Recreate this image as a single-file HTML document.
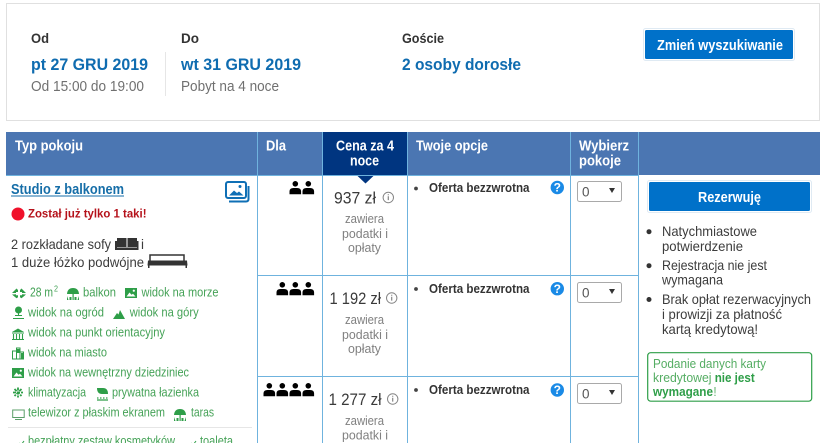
<!DOCTYPE html>
<html lang="pl">
<head>
<meta charset="utf-8">
<title>Studio z balkonem</title>
<style>
html,body{margin:0;padding:0;background:#fff;width:837px;height:443px;overflow:hidden}
svg{display:block}
text{font-family:"Liberation Sans",Arial,sans-serif;white-space:pre}
.b{font-weight:700}
.lab{font-size:14px;font-weight:700;fill:#333}
.blue{font-size:17px;font-weight:700;fill:#0f6cb0}
.sub{font-size:14.5px;fill:#707070}
.h{font-size:14.5px;font-weight:700;fill:#fff}
.g{font-size:13px;fill:#45a257}
.p{font-size:16.5px;fill:#3a3a3a}
.tax{font-size:13px;fill:#808080}
.of{font-size:12.5px;font-weight:700;fill:#333}
.t{font-size:14px;fill:#3c3c3c}
.gb{font-size:13px;fill:#55ad63}
</style>
</head>
<body>
<svg width="837" height="443" viewBox="0 0 837 443" xmlns="http://www.w3.org/2000/svg">
<defs>
<g id="person"><circle cx="5.8" cy="2.8" r="2.8" fill="#000"/><path d="M0 13.300V10.500Q0 7 4 7h3.600q4 0 4 3.500v2.800z" fill="#000"/></g>
<g id="info"><circle cx="0" cy="0" r="5.200" fill="none" stroke="#858585" stroke-width="1"/><path d="M0-1.200v3.800M0-3.200v1" stroke="#858585" stroke-width="1.200" fill="none"/></g>
<g id="help"><circle r="6.700" fill="#1a8ae6"/><text x="0" y="4.200" text-anchor="middle" font-size="12" font-weight="700" fill="#fff">?</text></g>
<g id="sel"><rect x=".5" y=".5" width="44" height="20" rx="2" fill="#fff" stroke="#a9a9a9"/><path d="M32 7h6l-3 5z" fill="#333"/><text x="5" y="15.500" font-size="13.500" fill="#555" textLength="7.500" lengthAdjust="spacingAndGlyphs">0</text></g>
<g id="umb" fill="#2e9e48"><path d="M0 7Q.5 1 6 1t6 6z"/><rect x="5.500" y="6" width="1.200" height="7"/><path d="M0 9l1.500 4H0zM12 9l-1.500 4H12zM2.500 10h2v3h-2zM7.500 10h2v3h-2z"/></g>
<g id="pic"><rect x="0" y="0" width="12" height="10" fill="#2e9e48"/><path d="M1.500 8.500l3-4 2 2.200 1.500-1 2.500 2.800z" fill="#fff"/><circle cx="8.800" cy="2.700" r="1.100" fill="#fff"/></g>
</defs>

<!-- top panel -->
<rect x="6.500" y="3.500" width="813" height="117" fill="#fff" stroke="#e0e0e0"/>
<text class="lab" x="31" y="43" textLength="18" lengthAdjust="spacingAndGlyphs">Od</text>
<text class="blue" x="31" y="70" textLength="117" lengthAdjust="spacingAndGlyphs">pt 27 GRU 2019</text>
<text class="sub" x="31" y="91" textLength="113" lengthAdjust="spacingAndGlyphs">Od 15:00 do 19:00</text>
<rect x="165" y="52" width="1" height="44" fill="#e6e6e6"/>
<text class="lab" x="181" y="43" textLength="18" lengthAdjust="spacingAndGlyphs">Do</text>
<text class="blue" x="181" y="70" textLength="120" lengthAdjust="spacingAndGlyphs">wt 31 GRU 2019</text>
<text class="sub" x="181" y="91" textLength="98" lengthAdjust="spacingAndGlyphs">Pobyt na 4 noce</text>
<text class="lab" x="402" y="43" textLength="42" lengthAdjust="spacingAndGlyphs">Goście</text>
<text class="blue" x="402" y="70" textLength="119" lengthAdjust="spacingAndGlyphs">2 osoby dorosłe</text>
<rect x="643.500" y="28.500" width="151" height="32" rx="2" fill="#fff" stroke="#dfeaf3"/>
<rect x="645" y="30" width="148" height="29" rx="1.500" fill="#0071c9"/>
<text class="h" x="657" y="50" textLength="126" lengthAdjust="spacingAndGlyphs">Zmień wyszukiwanie</text>

<!-- table header -->
<rect x="6" y="132" width="814" height="43" fill="#4b76b2"/>
<rect x="323" y="132" width="84" height="43" fill="#003580"/>
<path d="M356.500 175h18l-9 8.500z" fill="#003580"/>
<text class="h" x="15" y="150.500" textLength="68" lengthAdjust="spacingAndGlyphs">Typ pokoju</text>
<text class="h" x="266" y="150.500" textLength="20" lengthAdjust="spacingAndGlyphs">Dla</text>
<text class="h" x="336" y="150.500" textLength="58" lengthAdjust="spacingAndGlyphs">Cena za 4</text>
<text class="h" x="350" y="165.500" textLength="29" lengthAdjust="spacingAndGlyphs">noce</text>
<text class="h" x="416" y="150.500" textLength="72" lengthAdjust="spacingAndGlyphs">Twoje opcje</text>
<text class="h" x="579" y="150.500" textLength="50" lengthAdjust="spacingAndGlyphs">Wybierz</text>
<text class="h" x="579" y="165.500" textLength="42" lengthAdjust="spacingAndGlyphs">pokoje</text>

<!-- grid lines -->
<g fill="#6fb3de">
<rect x="6" y="175" width="632" height="1"/>
<rect x="257" y="132" width="1" height="311"/>
<rect x="322" y="132" width="1" height="311"/>
<rect x="407" y="132" width="1" height="311"/>
<rect x="570" y="132" width="1" height="311"/>
<rect x="638" y="132" width="1" height="311"/>
<rect x="257" y="275" width="381" height="1"/>
<rect x="257" y="376" width="381" height="1"/>
</g>

<!-- room column -->
<text class="b" x="11" y="194" font-size="14.500" fill="#166ea8" textLength="113" lengthAdjust="spacingAndGlyphs">Studio z balkonem</text>
<rect x="11" y="195.500" width="113" height="1" fill="#166ea8"/>
<g fill="none" stroke="#0f6fb5">
<rect x="226" y="182" width="20" height="16" rx="2" stroke-width="2"/>
<path d="M229 201.500h17q2.500 0 2.500-2.500V186" stroke-width="2"/>
</g>
<path d="M229 195.500l5-5 3 2.500 2-1.500 4.500 4z" fill="#0f6fb5"/>
<circle cx="240" cy="186.500" r="1.500" fill="#0f6fb5"/>

<circle cx="18" cy="214" r="6.500" fill="#f0112b"/>
<text class="b" x="28" y="217.500" font-size="12" fill="#b5121b" textLength="118.500" lengthAdjust="spacingAndGlyphs">Został już tylko 1 taki!</text>

<text class="t" x="11" y="249" textLength="100" lengthAdjust="spacingAndGlyphs">2 rozkładane sofy</text>
<path d="M117 238h9.500v9H117zM127.500 238h9.500v9h-9.500z" fill="#333"/>
<rect x="115" y="241" width="2" height="9" fill="#333"/>
<rect x="137" y="241" width="1.500" height="9" fill="#333"/>
<rect x="115" y="247.500" width="23.500" height="2.500" fill="#333"/>
<text class="t" x="141" y="249" textLength="3" lengthAdjust="spacingAndGlyphs">i</text>
<text class="t" x="11" y="267" textLength="133" lengthAdjust="spacingAndGlyphs">1 duże łóżko podwójne</text>
<path d="M150 261v-6h34v6" fill="none" stroke="#333" stroke-width="1.500"/>
<path d="M148 260.500h39l.5 5h-40z" fill="#333"/>
<path d="M148 265h1.500v3H148zM185.500 265h1.500v3h-1.500z" fill="#333"/>

<!-- facilities -->
<path d="M12 293l4.500-4.500 1.500 1.500v2h-2v1zM26 293l-4.500-4.500-1.500 1.500v2h2v1zM12 294.500l4.500 3.800 1.500-1v-2h-2v-1zM26 294.500l-4.500 3.800-1.500-1v-2h2v-1z" fill="#2e9e48"/>
<text class="g" x="30" y="296.700" textLength="23" lengthAdjust="spacingAndGlyphs">28 m</text>
<text x="54" y="291.500" font-size="8" fill="#45a257" textLength="4" lengthAdjust="spacingAndGlyphs">2</text>
<use href="#umb" x="67" y="287"/>
<text class="g" x="83" y="296.700" textLength="33" lengthAdjust="spacingAndGlyphs">balkon</text>
<use href="#pic" x="125" y="288"/>
<text class="g" x="141.500" y="296.700" textLength="77" lengthAdjust="spacingAndGlyphs">widok na morze</text>

<circle cx="18.500" cy="310" r="3.500" fill="#2e9e48"/>
<path d="M18.500 313v3M15 315.500h7M13 318.500h11" stroke="#2e9e48" stroke-width="1" fill="none"/>
<text class="g" x="28" y="316.700" textLength="76" lengthAdjust="spacingAndGlyphs">widok na ogród</text>
<path d="M113 319l4-6 1.500 1.500 1.500-4.500 5 9z" fill="#2e9e48"/>
<text class="g" x="129.700" y="316.700" textLength="69" lengthAdjust="spacingAndGlyphs">widok na góry</text>

<path d="M12 332l6-3.500 6 3.500z" fill="#2e9e48"/>
<path d="M12 333h12M13.500 334v5M16.500 334v5M19.500 334v5M22.500 334v5M12 339.500h12" stroke="#2e9e48" stroke-width="1.100" fill="none"/>
<text class="g" x="28" y="336.700" textLength="137" lengthAdjust="spacingAndGlyphs">widok na punkt orientacyjny</text>

<path d="M12.500 351h4v8h-4zM16.500 348h3.500v11h-3.500zM20 352h3.500v7H20z" fill="none" stroke="#2e9e48" stroke-width="1"/>
<rect x="17" y="349" width="3" height="4" fill="#2e9e48"/>
<rect x="21" y="353" width="3" height="6" fill="#2e9e48"/>
<text class="g" x="28" y="356.700" textLength="79" lengthAdjust="spacingAndGlyphs">widok na miasto</text>

<use href="#pic" x="12" y="368"/>
<text class="g" x="28" y="376.700" textLength="161" lengthAdjust="spacingAndGlyphs">widok na wewnętrzny dziedziniec</text>

<path d="M18 387.500v10M13 392.500h10M14.500 389l7 7M21.500 389l-7 7" stroke="#2e9e48" stroke-width="1.800" fill="none" stroke-dasharray="3 1"/>
<text class="g" x="28" y="396.700" textLength="58" lengthAdjust="spacingAndGlyphs">klimatyzacja</text>
<path d="M97 388h6q5 0 5 6h-6q-5 0-5-6z" fill="#2e9e48"/>
<path d="M97 398h1.500M100 398h1.500M103 398h1.500M106 398h1.500M97 400h11" stroke="#2e9e48" stroke-width="1.200" fill="none"/>
<text class="g" x="112" y="396.700" textLength="87" lengthAdjust="spacingAndGlyphs">prywatna łazienka</text>

<rect x="12.700" y="410" width="11.500" height="7.500" fill="none" stroke="#5b9f69" stroke-width="1"/>
<path d="M15 419.500h7" stroke="#5b9f69" stroke-width="1"/>
<text class="g" x="28" y="416.700" textLength="137" lengthAdjust="spacingAndGlyphs">telewizor z płaskim ekranem</text>
<use href="#umb" x="174" y="408"/>
<text class="g" x="191" y="416.700" textLength="23" lengthAdjust="spacingAndGlyphs">taras</text>

<rect x="8" y="427" width="244" height="1" fill="#e6e6e6"/>
<path d="M19 443l2 2 3-4" stroke="#2e9e48" fill="none"/>
<text class="g" x="28" y="445" textLength="147" lengthAdjust="spacingAndGlyphs">bezpłatny zestaw kosmetyków</text>
<path d="M191 443l2 2 3-4" stroke="#2e9e48" fill="none"/>
<text class="g" x="200" y="445" textLength="33" lengthAdjust="spacingAndGlyphs">toaleta</text>

<!-- people -->
<use href="#person" x="289.500" y="181"/><use href="#person" x="302.500" y="181"/>
<use href="#person" x="276.500" y="282"/><use href="#person" x="289.500" y="282"/><use href="#person" x="302.500" y="282"/>
<use href="#person" x="263.500" y="383"/><use href="#person" x="276.500" y="383"/><use href="#person" x="289.500" y="383"/><use href="#person" x="302.500" y="383"/>

<!-- prices -->
<text class="p" x="334" y="203.500" textLength="42" lengthAdjust="spacingAndGlyphs">937 zł</text>
<use href="#info" x="388.300" y="197.500"/>
<text class="tax" x="345" y="223" textLength="39" lengthAdjust="spacingAndGlyphs">zawiera</text>
<text class="tax" x="342" y="238" textLength="46" lengthAdjust="spacingAndGlyphs">podatki i</text>
<text class="tax" x="348" y="252" textLength="33" lengthAdjust="spacingAndGlyphs">opłaty</text>

<text class="p" x="329.500" y="304" textLength="51.500" lengthAdjust="spacingAndGlyphs">1 192 zł</text>
<use href="#info" x="391.700" y="298"/>
<text class="tax" x="345" y="324" textLength="39" lengthAdjust="spacingAndGlyphs">zawiera</text>
<text class="tax" x="342" y="339" textLength="46" lengthAdjust="spacingAndGlyphs">podatki i</text>
<text class="tax" x="348" y="353" textLength="33" lengthAdjust="spacingAndGlyphs">opłaty</text>

<text class="p" x="328.500" y="405" textLength="53" lengthAdjust="spacingAndGlyphs">1 277 zł</text>
<use href="#info" x="392.700" y="399"/>
<text class="tax" x="345" y="425" textLength="39" lengthAdjust="spacingAndGlyphs">zawiera</text>
<text class="tax" x="342" y="439.500" textLength="46" lengthAdjust="spacingAndGlyphs">podatki i</text>

<!-- options -->
<circle cx="416" cy="188.500" r="1.900" fill="#444"/>
<text class="of" x="429" y="192" textLength="100.500" lengthAdjust="spacingAndGlyphs">Oferta bezzwrotna</text>
<use href="#help" x="557.300" y="187.500"/>
<circle cx="416" cy="289" r="1.900" fill="#444"/>
<text class="of" x="429" y="293" textLength="100.500" lengthAdjust="spacingAndGlyphs">Oferta bezzwrotna</text>
<use href="#help" x="557.300" y="288.700"/>
<circle cx="416" cy="390" r="1.900" fill="#444"/>
<text class="of" x="429" y="394" textLength="100.500" lengthAdjust="spacingAndGlyphs">Oferta bezzwrotna</text>
<use href="#help" x="557.300" y="390"/>

<!-- selects -->
<use href="#sel" x="577" y="181"/>
<use href="#sel" x="577" y="282"/>
<use href="#sel" x="577" y="383"/>

<!-- reserve -->
<rect x="647.500" y="180.500" width="164" height="32" rx="2" fill="#fff" stroke="#dfeaf3"/>
<rect x="649" y="182" width="161" height="29" rx="1.500" fill="#0071c9"/>
<text class="h" x="698" y="202" textLength="63" lengthAdjust="spacingAndGlyphs">Rezerwuję</text>

<circle cx="649" cy="231.700" r="2.500" fill="#333"/>
<text class="t" x="662" y="236" textLength="95" lengthAdjust="spacingAndGlyphs">Natychmiastowe</text>
<text class="t" x="662" y="251" textLength="81" lengthAdjust="spacingAndGlyphs">potwierdzenie</text>
<circle cx="649" cy="265.700" r="2.500" fill="#333"/>
<text class="t" x="662" y="270" textLength="105" lengthAdjust="spacingAndGlyphs">Rejestracja nie jest</text>
<text class="t" x="662" y="284.500" textLength="61" lengthAdjust="spacingAndGlyphs">wymagana</text>
<circle cx="649" cy="299.500" r="2.500" fill="#333"/>
<text class="t" x="662" y="304" textLength="149" lengthAdjust="spacingAndGlyphs">Brak opłat rezerwacyjnych</text>
<text class="t" x="662" y="319" textLength="120" lengthAdjust="spacingAndGlyphs">i prowizji za płatność</text>
<text class="t" x="662" y="334" textLength="96" lengthAdjust="spacingAndGlyphs">kartą kredytową!</text>

<rect x="647.700" y="352.700" width="164" height="48.500" rx="3" fill="#fff" stroke="#2e9e48" stroke-width="1.200"/>
<text class="gb" x="653" y="368" textLength="113" lengthAdjust="spacingAndGlyphs">Podanie danych karty</text>
<text class="gb" x="653" y="382" textLength="58.500" lengthAdjust="spacingAndGlyphs">kredytowej</text>
<text class="gb b" x="714.700" y="382" style="fill:#2e9e48" textLength="40" lengthAdjust="spacingAndGlyphs">nie jest</text>
<text class="gb b" x="653" y="396" style="fill:#2e9e48" textLength="60" lengthAdjust="spacingAndGlyphs">wymagane</text>
<text class="gb" x="713.500" y="396" textLength="3" lengthAdjust="spacingAndGlyphs">!</text>
</svg>
</body>
</html>
